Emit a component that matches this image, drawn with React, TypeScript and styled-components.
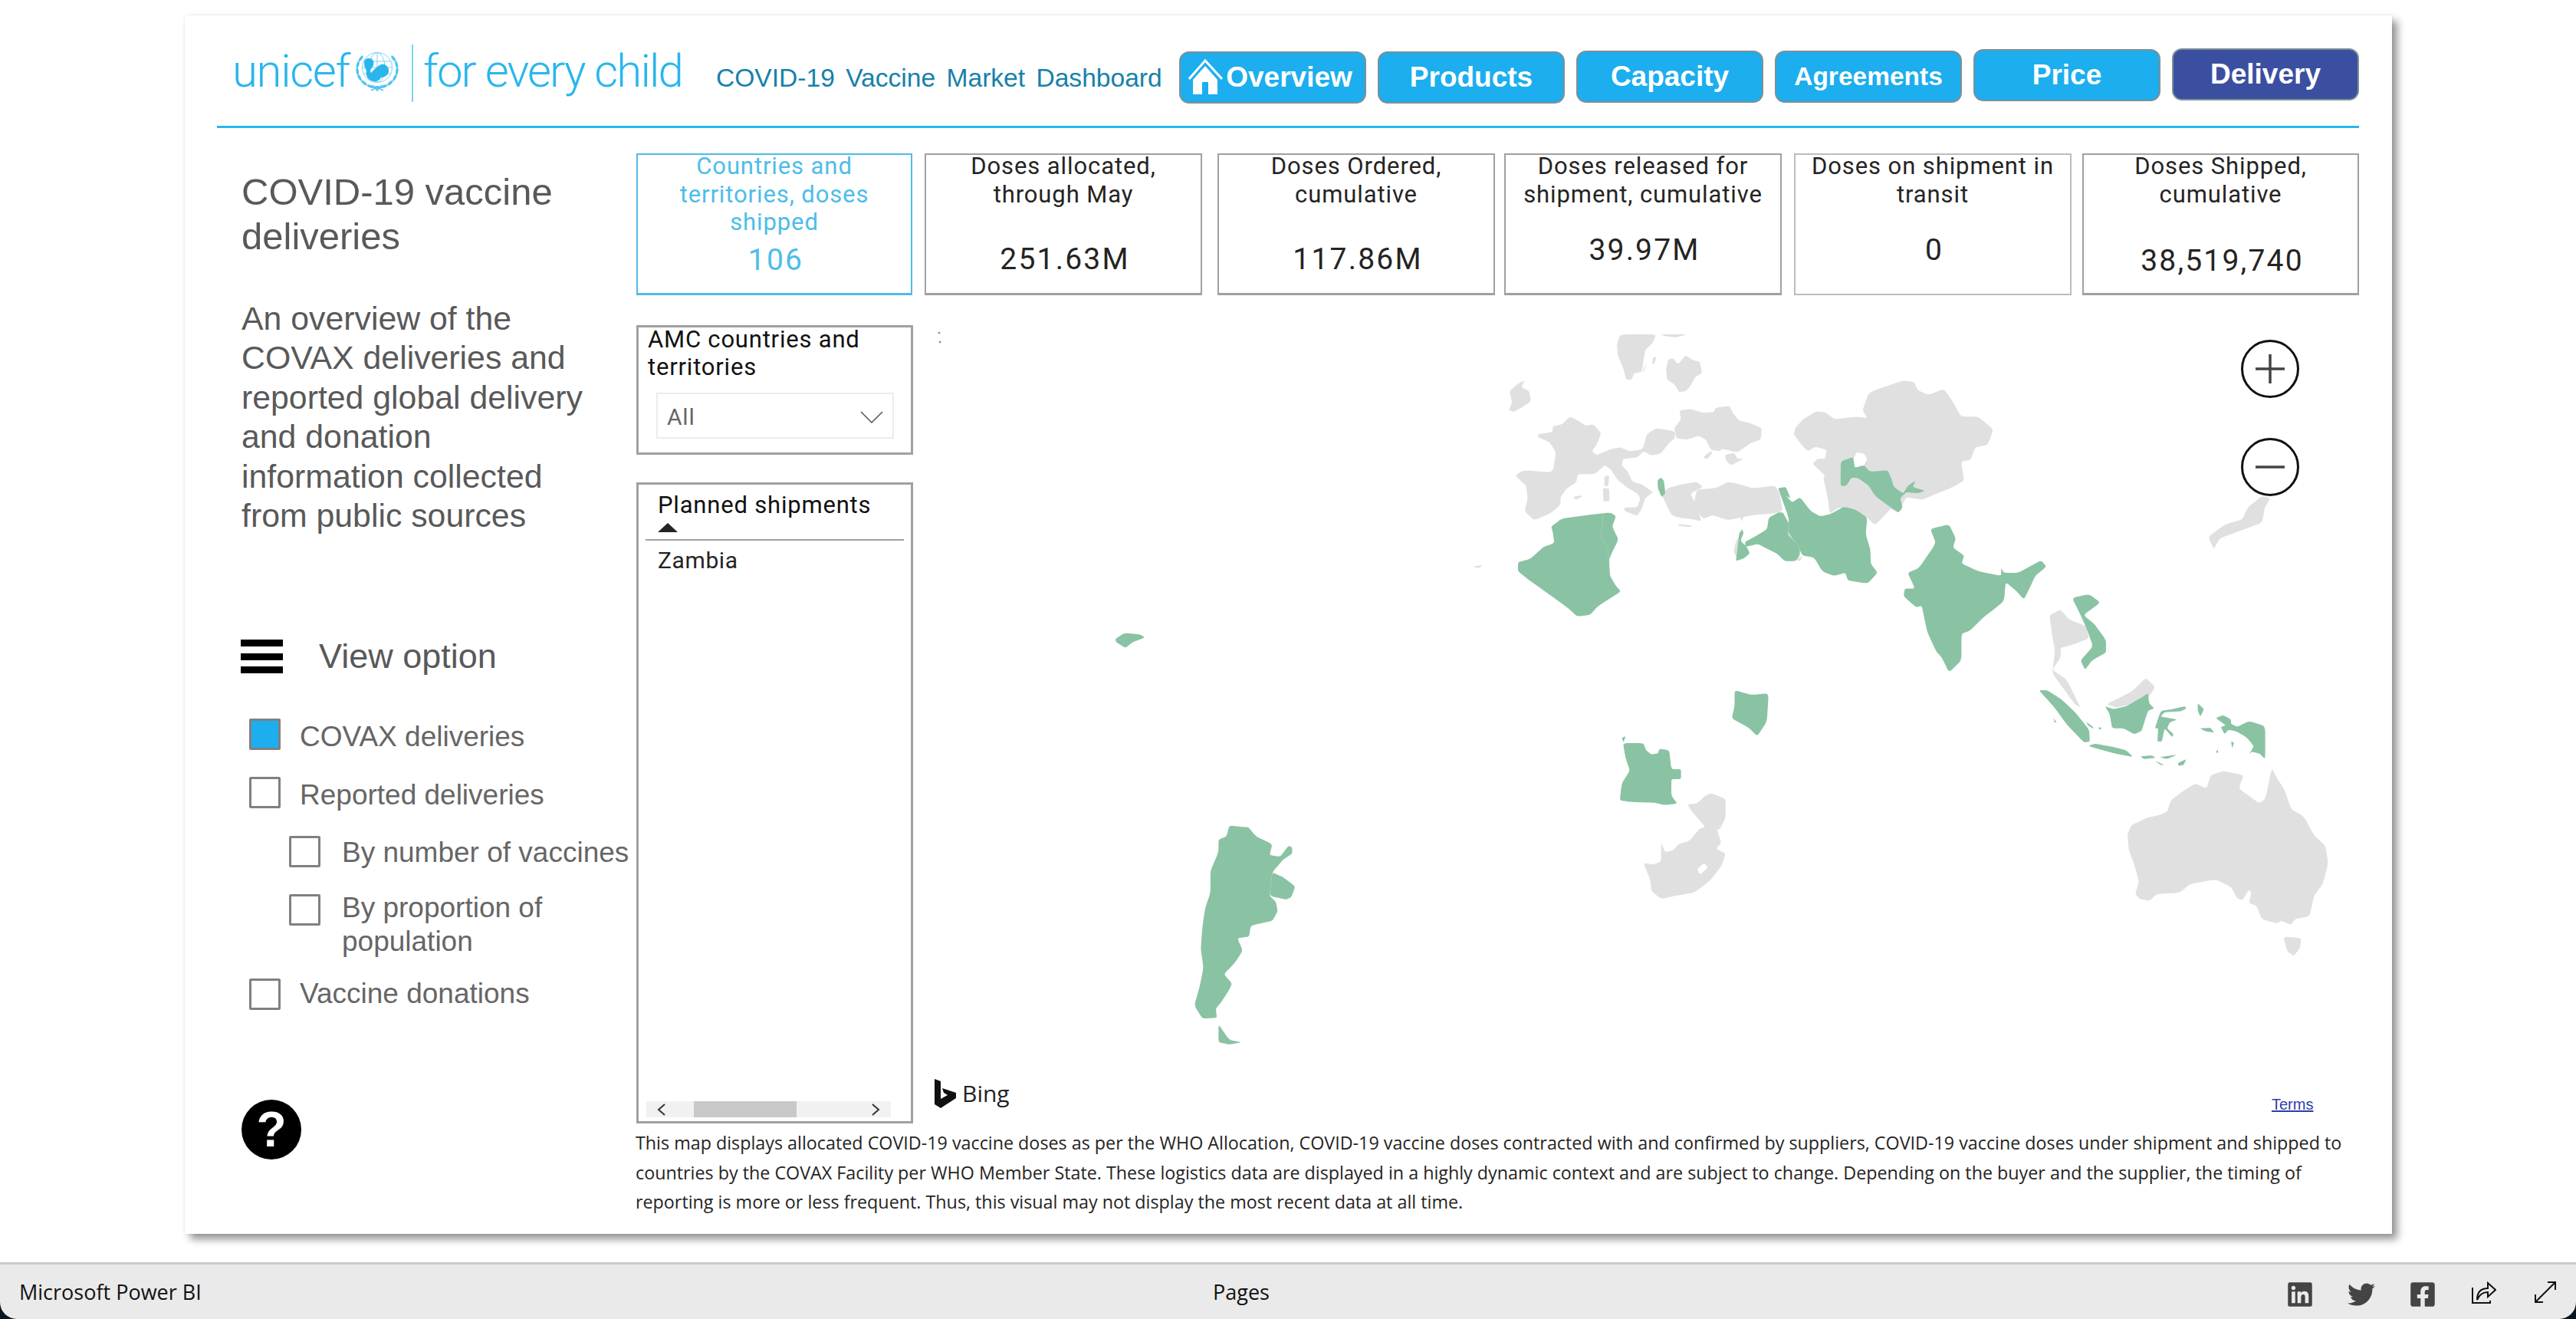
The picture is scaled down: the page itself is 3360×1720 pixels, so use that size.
import { createGlobalStyle, styled } from 'styled-components';
import { FaLinkedin, FaTwitter, FaFacebookSquare } from 'react-icons/fa';

const GlobalStyle = createGlobalStyle`
  html, body {
    margin: 0;
    padding: 0;
    background: #0b1420;
  }
  * {
    box-sizing: border-box;
  }
`;

const Frame = styled.div`
  width: 3360px;
  height: 1720px;
  display: flex;
  flex-direction: column;
  overflow: hidden;
`;

const Canvas = styled.div`
  height: 1646px;
  background: #fff;
  padding: 20px 0 0 241px;
`;

const Report = styled.div`
  width: 2879px;
  height: 1589px;
  padding: 0 43px 0 42px;
  background: #fff;
  box-shadow: 7px 7px 10px rgba(0, 0, 0, 0.42), 0 0 3px rgba(0, 0, 0, 0.1);
`;

const Header = styled.header`
  height: 147px;
  display: flex;
  border-bottom: 3px solid #29b6ec;
`;

const Logo = styled.div`
  width: 652px;
  padding: 38px 0 0 20px;
  display: flex;
  align-items: flex-start;
  color: #29b6ec;
  font-family: 'Roboto', sans-serif;
  font-weight: 300;
`;

const LogoWord = styled.span<{ $spacing: number }>`
  font-size: 60px;
  line-height: 70px;
  letter-spacing: ${(p) => p.$spacing}px;
  white-space: nowrap;
`;

const EmblemSvg = styled.svg`
  flex: none;
  margin: 10px 0 0 6px;
`;

const LogoRule = styled.div`
  flex: none;
  width: 2px;
  height: 75px;
  background: #7fd0f0;
  margin: 0 13px 0 15px;
`;

const DashTitle = styled.div`
  width: 605px;
  padding-top: 62px;
  color: #1781a9;
  font: 33.6px/40px 'Liberation Sans', sans-serif;
  word-spacing: 5px;
  white-space: nowrap;
`;

const Nav = styled.nav`
  display: flex;
  gap: 15px;
`;

const NavButton = styled.button<{ $top: number; $size: number; $active?: boolean }>`
  width: 244px;
  height: 68px;
  margin-top: ${(p) => p.$top}px;
  padding: 0;
  display: flex;
  align-items: center;
  justify-content: center;
  border: 2px solid #7f8f96;
  border-radius: 13px;
  background: ${(p) => (p.$active ? '#3b4fa0' : '#1caeee')};
  color: #fff;
  font: bold ${(p) => p.$size}px 'Liberation Sans', sans-serif;
`;

const HomeSvg = styled.svg`
  flex: none;
  margin: 0 3px 2px -6px;
`;

const Body = styled.div`
  display: flex;
`;

const Sidebar = styled.aside`
  width: 547px;
  padding: 54px 0 0 32px;
  color: #595959;
  font-family: 'Liberation Sans', sans-serif;
`;

const PageTitle = styled.h1`
  margin: 0;
  font-size: 49px;
  line-height: 58px;
  font-weight: normal;
`;

const Intro = styled.p`
  margin: 53px 0 0;
  font-size: 42.8px;
  line-height: 51.4px;
  white-space: pre-line;
`;

const ViewOption = styled.div`
  margin: 133px 0 0 -1px;
  display: flex;
  align-items: center;
  gap: 47px;
  height: 50px;
  font-size: 45px;
`;

const Burger = styled.div`
  width: 55px;
  height: 44px;
  display: flex;
  flex-direction: column;
  justify-content: space-between;
`;

const BurgerBar = styled.span`
  height: 9px;
  background: #000;
`;

const Options = styled.div`
  margin-top: 56px;
  display: flex;
  flex-direction: column;
  color: #666;
  font-size: 37px;
  line-height: 44px;
`;

const Option = styled.div<{ $indent?: boolean; $top: number }>`
  height: ${(p) => (p.$indent ? 'auto' : '44px')};
  display: flex;
  gap: ${(p) => (p.$indent ? 28 : 25)}px;
  margin-top: ${(p) => p.$top}px;
  margin-left: ${(p) => (p.$indent ? 62 : 10)}px;
`;

const Box = styled.span<{ $on?: boolean }>`
  flex: none;
  width: 41px;
  height: 41px;
  border: 3px solid #808080;
  border-radius: 2px;
  background: ${(p) => (p.$on ? '#1caeee' : '#fff')};
`;

const OptionText = styled.span<{ $shift: number }>`
  margin-top: ${(p) => p.$shift}px;
  white-space: pre;
`;

const Help = styled.div`
  margin: 114px 0 0 0;
  width: 78px;
  height: 78px;
  border-radius: 50%;
  background: #000;
  color: #fff;
  display: flex;
  align-items: center;
  justify-content: center;
  font: bold 64px 'Liberation Sans', sans-serif;
`;

const Main = styled.main`
  width: 2247px;
`;

const KpiRow = styled.div`
  display: flex;
  margin-top: 33px;
`;

const Kpi = styled.div<{ $w: number; $gap: number; $selected?: boolean; $faint?: boolean }>`
  width: ${(p) => p.$w}px;
  height: 185px;
  margin-left: ${(p) => p.$gap}px;
  border: 2px solid ${(p) => (p.$selected ? '#4dbde8' : p.$faint ? '#bdbdbd' : '#a0a0a0')};
  border-bottom-width: ${(p) => (p.$faint ? 2 : 3)}px;
  color: ${(p) => (p.$selected ? '#4dbde8' : '#252423')};
  text-align: center;
  font-family: 'Roboto', sans-serif;
`;

const KpiLabel = styled.div`
  margin-top: -3px;
  font-size: 31px;
  line-height: 36.5px;
  letter-spacing: 0.9px;
  white-space: pre-line;
`;

const KpiValue = styled.div<{ $top: number }>`
  margin-top: ${(p) => p.$top}px;
  padding-left: 4px;
  font-size: 39px;
  line-height: 44px;
  letter-spacing: 2.2px;
`;

const Middle = styled.div`
  display: flex;
  margin-top: 39px;
`;

const Slicers = styled.div`
  width: 361px;
  display: flex;
  flex-direction: column;
  gap: 36px;
`;

const SlicerCard = styled.div`
  height: 169px;
  border: 3px solid #a0a0a0;
  padding: 0 22px 0 12px;
  color: #111;
  font: 31px/36px 'Roboto', sans-serif;
  letter-spacing: 0.8px;
`;

const SlicerTitle = styled.div`
  margin-top: -2px;
`;

const Select = styled.div`
  margin: 15px 0 0 11px;
  height: 60px;
  border: 2px solid #ececec;
  padding: 4px 12px 0;
  display: flex;
  align-items: center;
  justify-content: space-between;
  color: #666;
  font-size: 30px;
`;

const ShipmentCard = styled.div`
  height: 836px;
  border: 3px solid #a0a0a0;
  padding: 9px 9px 5px;
  display: flex;
  flex-direction: column;
  color: #111;
  font-family: 'Roboto', sans-serif;
`;

const ShipmentHead = styled.div`
  padding: 0 0 9px 16px;
  border-bottom: 2px solid #a0a0a0;
  font-size: 31px;
  line-height: 36px;
  letter-spacing: 0.8px;
`;

const SortMark = styled.div`
  width: 0;
  height: 0;
  margin-top: 5px;
  border-left: 13px solid transparent;
  border-right: 13px solid transparent;
  border-bottom: 12px solid #252423;
`;

const ShipmentRow = styled.div`
  flex: 1;
  padding: 6px 0 0 16px;
  font-size: 30px;
  line-height: 40px;
  letter-spacing: 0.6px;
  color: #252423;
`;

const Scrollbar = styled.div`
  width: 319px;
  height: 21px;
  margin-left: 1px;
  padding: 0 14px;
  display: flex;
  align-items: center;
  justify-content: space-between;
  background: #f1f1f1;
  position: relative;
`;

const ScrollThumb = styled.div`
  position: absolute;
  left: 62px;
  top: 0;
  width: 134px;
  height: 21px;
  background: #c8c8c8;
`;

const MapPanel = styled.div`
  width: 1886px;
  height: 1042px;
  position: relative;
`;

const MapSvg = styled.svg`
  display: block;
  width: 100%;
  height: 100%;
`;

const ZoomButton = styled.div<{ $top: number }>`
  position: absolute;
  left: 1732px;
  top: ${(p) => p.$top}px;
  width: 76px;
  height: 76px;
  border: 3px solid #111;
  border-radius: 50%;
  background: #fff;
  display: flex;
  align-items: center;
  justify-content: center;
`;

const Bing = styled.div`
  position: absolute;
  left: 28px;
  top: 981px;
  display: flex;
  align-items: center;
  gap: 8px;
  color: #222;
  font: 30px 'Open Sans', sans-serif;
`;

const Terms = styled.a`
  position: absolute;
  left: 1772px;
  top: 1005px;
  color: #2b3ea8;
  text-decoration: underline;
  font: 20px 'Liberation Sans', sans-serif;
`;

const Note = styled.p`
  margin: 5px 0 0 -1px;
  color: #252423;
  font: 23.3px/38.5px 'Open Sans', sans-serif;
  white-space: pre-line;
`;

const Footer = styled.footer`
  height: 74px;
  border-top: 3px solid #cacaca;
  border-radius: 0 0 22px 22px;
  background: #eaeaea;
  padding-left: 25px;
  display: flex;
  align-items: center;
  position: relative;
  color: #111;
  font: 27px 'Open Sans', sans-serif;
`;

const FooterCenter = styled.span`
  position: absolute;
  left: 1582px;
`;

const FooterIcons = styled.div`
  margin: 6px 0 0 auto;
  display: flex;
  color: #444;
  font-size: 36px;
`;

const FooterIcon = styled.span`
  width: 80px;
  display: flex;
  justify-content: center;
`;

const nav = [
  { label: 'Overview', top: 67, size: 37, home: true },
  { label: 'Products', top: 67, size: 37 },
  { label: 'Capacity', top: 66, size: 37 },
  { label: 'Agreements', top: 66, size: 33.5 },
  { label: 'Price', top: 64, size: 37 },
  { label: 'Delivery', top: 63, size: 37, active: true },
];

const kpis = [
  { w: 360, gap: 0, label: 'Countries and\nterritories, doses\nshipped', value: '106', top: 8, selected: true },
  { w: 362, gap: 16, label: 'Doses allocated,\nthrough May', value: '251.63M', top: 44 },
  { w: 362, gap: 20, label: 'Doses Ordered,\ncumulative', value: '117.86M', top: 44 },
  { w: 362, gap: 12, label: 'Doses released for\nshipment, cumulative', value: '39.97M', top: 32 },
  { w: 362, gap: 16, label: 'Doses on shipment in\ntransit', value: '0', top: 32, faint: true },
  { w: 361, gap: 14, label: 'Doses Shipped,\ncumulative', value: '38,519,740', top: 46 },
];

const options = [
  { label: 'COVAX deliveries', top: 0, shift: 2, on: true },
  { label: 'Reported deliveries', top: 32, shift: 2 },
  { label: 'By number of vaccines', top: 33, shift: 0, indent: true },
  { label: 'By proportion of\npopulation', top: 32, shift: -4, indent: true },
  { label: 'Vaccine donations', top: 26, shift: -2 },
];

const introText = `An overview of the
COVAX deliveries and
reported global delivery
and donation
information collected
from public sources`;

const noteText = `This map displays allocated COVID-19 vaccine doses as per the WHO Allocation, COVID-19 vaccine doses contracted with and confirmed by suppliers, COVID-19 vaccine doses under shipment and shipped to
countries by the COVAX Facility per WHO Member State. These logistics data are displayed in a highly dynamic context and are subject to change. Depending on the buyer and the supplier, the timing of
reporting is more or less frequent. Thus, this visual may not display the most recent data at all time.`;

const GREEN = '#8ac3a3';
const GRAY = '#e0e0e0';

// traced from crops of the map, each list in the pixel space of its own crop
const eurasiaGray = [
  '375,18 490,18 480,50 455,80 445,165 420,170 412,195 395,195 385,150 368,100 365,60',
  '500,18 590,18 555,30 520,25',
  '480,110 492,105 485,130 478,135',
  '460,125 447,165 451,165',
  '530,115 545,112 560,135 585,100 610,120 630,125 637,170 615,185 600,220 585,240 565,245 550,215 525,195 522,150',
  '50,210 70,198 60,225 85,240 90,280 60,305 35,322 20,315 30,285 22,240',
  '215,340 240,355 265,375 290,370 315,405 300,450 285,475 300,490 320,480 350,465 375,460 405,475 440,470 450,460 460,410 490,385 540,395 550,400 550,425 530,445 505,485 475,492 450,475 430,500 385,505 380,530 400,555 415,595 445,605 480,635 465,650 455,660 445,700 430,728 390,710 388,695 430,695 440,660 430,640 395,615 365,585 345,545 325,530 295,565 240,565 235,598 205,620 185,655 185,685 150,720 100,745 70,710 80,660 75,610 40,570 65,550 160,558 170,480 150,440 112,420 115,408 160,400 160,378 190,370',
  '565,315 600,310 640,325 675,322 680,305 725,298 735,325 755,355 790,365 828,385 825,430 790,445 750,480 700,465 695,475 665,470 650,430 625,415 590,430 555,425 548,385 570,350',
  '710,490 740,482 750,505 770,505 730,530 715,515',
  '640,500 665,475 670,480 655,505',
  '325,575 340,570 338,610 325,612',
  '320,620 340,620 342,670 322,672',
  '225,655 245,648 255,652 235,665',
  '510,650 525,620 570,605 620,595 640,615 600,640 620,690 635,750 600,740 560,735 540,725 525,690',
  '560,760 605,765 600,772 565,768',
  '620,625 680,620 720,595 760,605 800,620 870,610 885,640 895,710 860,720 800,725 720,745 670,725 640,740 610,690',
  '745,830 755,810 750,895 738,870',
  '758,730 770,730 765,750',
  '935,385 960,350 1000,320 1030,322 1060,350 1130,340 1165,345 1150,315 1170,245 1280,198 1315,205 1325,235 1360,255 1410,232 1435,275 1465,340 1520,340 1568,390 1550,450 1510,460 1495,510 1465,515 1475,590 1440,615 1370,650 1340,665 1290,655 1270,700 1260,715 1240,700 1190,765 1165,735 1130,705 1075,695 1045,720 1040,665 1025,580 1030,570 990,525 1005,505 1030,505 1035,470 1000,458 975,475 955,450 930,410',
  '935,895 960,885 950,905 935,900',
];

const eurasiaGreen = [
  '1080,515 1120,498 1125,540 1155,530 1172,555 1230,550 1240,575 1250,615 1280,640 1295,610 1320,590 1310,615 1350,630 1325,640 1290,635 1270,660 1278,695 1265,715 1240,695 1190,650 1170,610 1135,580 1115,578 1098,610 1080,612',
  '495,590 505,578 515,590 520,640 508,655 496,620',
  '155,770 190,738 290,722 345,715 362,730 350,770 370,820 350,870 340,900 343,963 360,999 378,1024 306,1080 279,1116 238,1122 206,1086 49,948 49,909 88,897 130,850 165,835 160,790',
  '755,800 765,780 770,795 760,825 780,850 790,875 770,895 745,905 750,860',
  '805,810 845,780 850,735 880,715 895,715 915,760 910,800 950,850 948,885 936,905 901,905 877,876 850,860 815,838 775,850 775,830',
  '880,620 905,615 920,660 905,650 925,675 950,655 985,710 1015,730 1050,720 1090,692 1130,705 1165,735 1160,800 1175,860 1176,915 1198,951 1166,993 1103,981 1095,951 1058,963 1021,945 995,891 958,884 945,850 910,790 915,740 892,660',
];

const upperGray = [
  '1045,985 1065,968 1080,1000 1110,1020 1115,1060 1085,1080 1065,1090 1065,1120 1050,1160 1075,1190 1100,1280 1090,1270 1070,1220 1050,1170 1055,1100 1050,1050',
  '1145,1270 1190,1230 1215,1185 1232,1215 1215,1260 1165,1280',
  '1420,605 1435,612 1425,640 1420,690 1390,710 1375,720 1345,740 1335,775 1325,735 1355,695 1385,680 1395,640',
  '28,830 45,825 40,835',
];

const upperGreen = [
  '835,710 868,695 880,740 875,770 895,795 890,820 920,845 960,860 960,835 965,850 990,850 1030,810 1040,830 1020,860 1010,900 1000,935 985,905 968,880 965,940 945,970 930,990 905,1035 890,1045 890,1130 868,1168 855,1120 845,1100 830,1040 825,1000 820,955 810,960 788,925 790,900 808,900 795,850 815,835 845,755',
  '1085,930 1115,918 1135,945 1105,985 1125,1015 1145,1065 1145,1105 1120,1130 1108,1160 1100,1130 1122,1085 1110,1025 1100,985',
  '490,1225 520,1240 550,1235 547,1325 530,1372 515,1345 485,1315 490,1275',
];

const islandsGreen = [
  '178,0 210,0 265,30 320,75 375,135 378,175 355,178 290,120 240,60',
  '370,190 400,182 480,195 520,205 548,228 470,215',
  '437,55 470,65 520,55 580,25 605,10 610,45 630,62 605,70 580,140 550,150 510,130 465,130 455,80',
  '655,70 700,65 750,55 755,62 735,72 670,75 655,90 690,95 720,100 690,110 680,130 705,150 700,160 670,130 660,175 642,175 645,130 632,130',
  '870,95 900,85 930,100 930,115 955,125 1000,105 1064,122 1064,235 1040,215 1010,210 1000,220 1020,190 990,160 950,140 920,135 905,150 890,125 910,120',
  '575,225 620,222 635,230 590,235',
  '650,228 720,220 680,235',
  '632,240 670,255 655,255',
  '722,248 755,235 745,255 725,258',
  '800,45 825,65 810,90 800,70',
  '808,130 850,128 865,145 830,140',
  '930,175 942,178 935,198',
  '870,210 880,202 878,215',
  '365,108 390,125 393,132 370,120',
  '412,125 425,130 415,135',
  '235,95 248,110 240,110',
];

const islandsGray = [
  '525,490 540,460 600,435 650,425 680,415 695,375 740,345 790,318 835,335 850,290 900,275 980,290 960,335 1040,385 1065,370 1090,265 1110,300 1140,340 1165,405 1215,430 1255,495 1300,530 1310,590 1290,660 1255,700 1238,770 1180,780 1165,800 1125,785 1110,795 1050,780 1030,735 1000,725 1010,690 1000,680 975,715 955,710 930,670 870,645 770,660 730,690 640,695 610,718 575,712 555,695 570,650 550,590 530,545',
  '1135,840 1205,845 1200,880 1175,905 1150,890',
];

const southGreen = [
  '1307,512 1345,512 1350,535 1360,548 1372,545 1375,530 1393,535 1397,595 1415,595 1415,627 1397,627 1397,680 1408,705 1385,710 1365,702 1320,700 1301,695 1305,640 1320,600 1312,560',
  '1305,495 1312,490 1308,510',
  '575,775 600,780 610,780 625,810 655,835 650,870 670,875 685,840 692,845 692,865 675,885 655,925 650,1000 662,1020 665,1050 655,1080 615,1095 612,1130 590,1135 600,1175 585,1215 565,1250 580,1280 575,1300 560,1340 550,1360 552,1390 525,1392 510,1350 520,1290 527,1230 522,1170 525,1100 530,1040 540,990 540,920 555,860 555,820 570,810',
  '655,925 675,940 698,970 690,1005 680,1012 650,1000',
  '555,1410 575,1460 598,1468 575,1475 555,1468',
  '363,180 380,160 410,165 418,175 395,190 382,208 365,190',
];

const southGray =
  '1427,708 1445,705 1460,680 1470,672 1498,690 1498,750 1488,785 1482,790 1490,830 1480,850 1498,865 1490,905 1470,950 1440,990 1410,998 1378,1010 1360,985 1358,950 1345,895 1365,900 1378,890 1378,828 1385,860 1400,855 1410,835 1430,825 1450,785 1460,780 1450,760 1435,730';

// rounds every corner of a traced outline so coasts don't look like straight cuts
function coast(points: string) {
  const pts = points.split(' ').map((p) => p.split(',').map(Number));
  const n = pts.length;
  let d = '';
  pts.forEach(([x, y], i) => {
    const [px, py] = pts[(i + n - 1) % n];
    const [nx, ny] = pts[(i + 1) % n];
    const ax = x + (px - x) * 0.2;
    const ay = y + (py - y) * 0.2;
    const bx = x + (nx - x) * 0.2;
    const by = y + (ny - y) * 0.2;
    d += `${i ? 'L' : 'M'}${ax} ${ay}Q${x} ${y} ${bx} ${by}`;
  });
  return d + 'Z';
}

function Shapes({ list, fill }: { list: string[]; fill: string }) {
  return (
    <>
      {list.map((points) => (
        <path key={points} d={coast(points)} fill={fill} />
      ))}
    </>
  );
}

function WorldMap() {
  return (
    <MapSvg viewBox="1191 424 1886 1042">
      <g transform="translate(1960 430) scale(0.4082 0.3333)">
        <Shapes list={eurasiaGray} fill={GRAY} />
        <path d={coast('1120,510 1130,480 1155,485 1165,505 1150,540 1125,540')} fill="#fff" />
        <Shapes list={eurasiaGreen} fill={GREEN} />
        <path d="M320 725L318 775L310 800L335 850L338 900" fill="none" stroke="#a0d0b5" strokeWidth="2" />
        <path d="M895 715L915 760L912 800L950 850L948 885" fill="none" stroke="#a0d0b5" strokeWidth="2" />
      </g>
      <g transform="translate(1900 400) scale(0.7398 0.4082)">
        <Shapes list={upperGray} fill={GRAY} />
        <Shapes list={upperGreen} fill={GREEN} />
      </g>
      <g transform="translate(2600 900) scale(0.3333 0.3827)">
        <Shapes list={islandsGray} fill={GRAY} />
        <Shapes list={islandsGreen} fill={GREEN} />
      </g>
      <g transform="translate(1200 760) scale(0.7015 0.4082)">
        <path d={coast(southGray)} fill={GRAY} />
        <path d={coast('1445,915 1458,895 1465,910 1450,932')} fill="#fff" />
        <Shapes list={southGreen} fill={GREEN} />
      </g>
      <circle cx="1225" cy="434" r="1.5" fill="#999" />
      <circle cx="1226" cy="446" r="1.5" fill="#999" />
    </MapSvg>
  );
}

function Emblem() {
  const leaves = [0, 1, 2, 3, 4, 5, 6];
  return (
    <EmblemSvg width="60" height="54" viewBox="0 0 60 54">
      <g fill="#4fc3f0">
        {leaves.map((i) => {
          const deg = i * 21 - 35;
          const a = (deg * Math.PI) / 180;
          const x = Math.cos(a) * 26;
          const y = Math.sin(a) * 24;
          return (
            <g key={i}>
              <ellipse cx={30 + x} cy={22 + y} rx="1.7" ry="4.6" transform={`rotate(${deg} ${30 + x} ${22 + y})`} />
              <ellipse cx={30 - x} cy={22 + y} rx="1.7" ry="4.6" transform={`rotate(${-deg} ${30 - x} ${22 + y})`} />
            </g>
          );
        })}
      </g>
      <g fill="none" stroke="#7fd3f3" strokeWidth="1">
        <circle cx="30" cy="20" r="19.5" />
        <ellipse cx="30" cy="20" rx="10" ry="19.5" />
        <path d="M30 1v38M12 12h36M12 28h36M10.5 20h39" />
      </g>
      <path
        d="M13 14C13 8 19 7 23 9C26 11 26 16 24 19C22 22 20 24 22 27C25 24 28 20 33 17C38 14 44 17 45 23C46 29 40 33 35 33C33 38 26 40 20 36C16 33 15 28 16 24C14 21 13 18 13 14Z"
        fill="#29b6ec"
      />
      <path d="M24 43L30 50L36 43M22 50L30 46L38 50" fill="none" stroke="#4fc3f0" strokeWidth="1.5" />
    </EmblemSvg>
  );
}

function HomeIcon() {
  return (
    <HomeSvg width="46" height="46" viewBox="0 0 46 46">
      <path d="M1 26L22 2L44 26" fill="none" stroke="#fff" strokeWidth="3" />
      <path d="M22 9L38 27V46H26V30H18V46H6V27Z" fill="#fff" />
    </HomeSvg>
  );
}

function BingMark() {
  return (
    <svg width="28" height="38" viewBox="0 0 28 38">
      <path d="M0 0L8 3V26L17 21L12 18L10 12L28 18V25L8 38L0 33Z" fill="#111" />
    </svg>
  );
}

function ShareIcon() {
  return (
    <svg width="32" height="30" viewBox="0 0 32 30" fill="none" stroke="#111" strokeWidth="2">
      <path d="M1 9V29H24V26" />
      <path d="M7 25C7 15 12 10 21 10V3L31 12L21 21V15C14 15 10 18 7 25Z" />
    </svg>
  );
}

function ExpandIcon() {
  return (
    <svg width="30" height="30" viewBox="0 0 30 30" fill="none" stroke="#111" strokeWidth="2">
      <path d="M2 28L28 2M18 2H28V12M2 18V28H12" />
    </svg>
  );
}

export default function App() {
  return (
    <Frame>
      <GlobalStyle />
      <Canvas>
        <Report>
          <Header>
            <Logo>
              <LogoWord $spacing={-1.4}>unicef</LogoWord>
              <Emblem />
              <LogoRule />
              <LogoWord $spacing={-1.9}>for every child</LogoWord>
            </Logo>
            <DashTitle>COVID-19 Vaccine Market Dashboard</DashTitle>
            <Nav>
              {nav.map((item) => (
                <NavButton key={item.label} $top={item.top - 20} $size={item.size} $active={item.active}>
                  {item.home && <HomeIcon />}
                  {item.label}
                </NavButton>
              ))}
            </Nav>
          </Header>
          <Body>
            <Sidebar>
              <PageTitle>
                COVID-19 vaccine
                <br />
                deliveries
              </PageTitle>
              <Intro>{introText}</Intro>
              <ViewOption>
                <Burger>
                  <BurgerBar />
                  <BurgerBar />
                  <BurgerBar />
                </Burger>
                View option
              </ViewOption>
              <Options>
                {options.map((o) => (
                  <Option key={o.label} $top={o.top} $indent={o.indent}>
                    <Box $on={o.on} />
                    <OptionText $shift={o.shift}>{o.label}</OptionText>
                  </Option>
                ))}
              </Options>
              <Help>?</Help>
            </Sidebar>
            <Main>
              <KpiRow>
                {kpis.map((k) => (
                  <Kpi key={k.label} $w={k.w} $gap={k.gap} $selected={k.selected} $faint={k.faint}>
                    <KpiLabel>{k.label}</KpiLabel>
                    <KpiValue $top={k.top}>{k.value}</KpiValue>
                  </Kpi>
                ))}
              </KpiRow>
              <Middle>
                <Slicers>
                  <SlicerCard>
                    <SlicerTitle>AMC countries and territories</SlicerTitle>
                    <Select>
                      All
                      <svg width="30" height="16" viewBox="0 0 30 16" fill="none" stroke="#555" strokeWidth="1.5">
                        <path d="M1 1L15 15L29 1" />
                      </svg>
                    </Select>
                  </SlicerCard>
                  <ShipmentCard>
                    <ShipmentHead>
                      Planned shipments
                      <SortMark />
                    </ShipmentHead>
                    <ShipmentRow>Zambia</ShipmentRow>
                    <Scrollbar>
                      <svg width="12" height="16" viewBox="0 0 12 16" fill="none" stroke="#333" strokeWidth="2">
                        <path d="M10 1L2 8L10 15" />
                      </svg>
                      <ScrollThumb />
                      <svg width="12" height="16" viewBox="0 0 12 16" fill="none" stroke="#333" strokeWidth="2">
                        <path d="M2 1L10 8L2 15" />
                      </svg>
                    </Scrollbar>
                  </ShipmentCard>
                </Slicers>
                <MapPanel>
                  <WorldMap />
                  <ZoomButton $top={19}>
                    <svg width="40" height="40" viewBox="0 0 40 40" stroke="#444" strokeWidth="3.5">
                      <path d="M20 1V39M1 20H39" />
                    </svg>
                  </ZoomButton>
                  <ZoomButton $top={147}>
                    <svg width="40" height="40" viewBox="0 0 40 40" stroke="#444" strokeWidth="3.5">
                      <path d="M1 20H39" />
                    </svg>
                  </ZoomButton>
                  <Bing>
                    <BingMark />
                    Bing
                  </Bing>
                  <Terms>Terms</Terms>
                </MapPanel>
              </Middle>
              <Note>{noteText}</Note>
            </Main>
          </Body>
        </Report>
      </Canvas>
      <Footer>
        Microsoft Power BI
        <FooterCenter>Pages</FooterCenter>
        <FooterIcons>
          <FooterIcon>
            <FaLinkedin />
          </FooterIcon>
          <FooterIcon>
            <FaTwitter />
          </FooterIcon>
          <FooterIcon>
            <FaFacebookSquare />
          </FooterIcon>
          <FooterIcon>
            <ShareIcon />
          </FooterIcon>
          <FooterIcon>
            <ExpandIcon />
          </FooterIcon>
        </FooterIcons>
      </Footer>
    </Frame>
  );
}
